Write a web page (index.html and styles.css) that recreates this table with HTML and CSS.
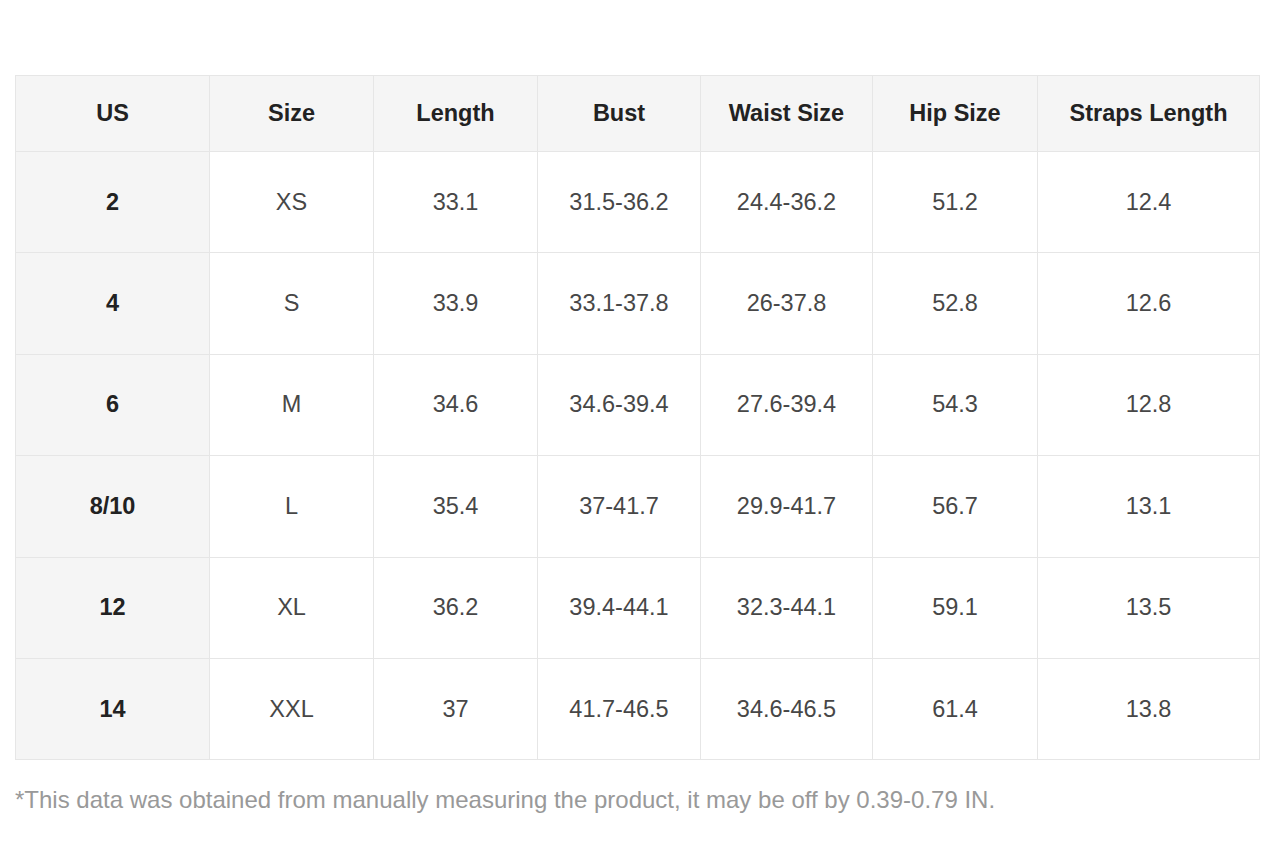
FILE: index.html
```html
<!DOCTYPE html>
<html>
<head>
<meta charset="utf-8">
<link rel="stylesheet" href="styles.css">
</head>
<body>
<div class="wrap">
<table class="chart">
<colgroup>
<col class="c1"><col class="c2"><col class="c3"><col class="c4"><col class="c5"><col class="c6"><col class="c7">
</colgroup>
<thead>
<tr><th>US</th><th>Size</th><th>Length</th><th>Bust</th><th>Waist Size</th><th>Hip Size</th><th>Straps Length</th></tr>
</thead>
<tbody>
<tr><th>2</th><td>XS</td><td>33.1</td><td>31.5-36.2</td><td>24.4-36.2</td><td>51.2</td><td>12.4</td></tr>
<tr><th>4</th><td>S</td><td>33.9</td><td>33.1-37.8</td><td>26-37.8</td><td>52.8</td><td>12.6</td></tr>
<tr><th>6</th><td>M</td><td>34.6</td><td>34.6-39.4</td><td>27.6-39.4</td><td>54.3</td><td>12.8</td></tr>
<tr><th>8/10</th><td>L</td><td>35.4</td><td>37-41.7</td><td>29.9-41.7</td><td>56.7</td><td>13.1</td></tr>
<tr><th>12</th><td>XL</td><td>36.2</td><td>39.4-44.1</td><td>32.3-44.1</td><td>59.1</td><td>13.5</td></tr>
<tr><th>14</th><td>XXL</td><td>37</td><td>41.7-46.5</td><td>34.6-46.5</td><td>61.4</td><td>13.8</td></tr>
</tbody>
</table>
<p class="note">*This data was obtained from manually measuring the product, it may be off by 0.39-0.79 IN.</p>
</div>
</body>
</html>
```
FILE: styles.css
```css
html, body {
  margin: 0;
  padding: 0;
  background: #ffffff;
}
.wrap {
  padding: 75px 0 0 15px;
  font-family: "Liberation Sans", Arial, sans-serif;
}
.chart {
  border-collapse: collapse;
  table-layout: fixed;
  width: 1244px;
}
.c1 { width: 194px; }
.c2 { width: 164px; }
.c3 { width: 164px; }
.c4 { width: 163px; }
.c5 { width: 172px; }
.c6 { width: 165px; }
.c7 { width: 222px; }
.chart th, .chart td {
  border: 1px solid #e6e6e6;
  text-align: center;
  vertical-align: middle;
  padding: 0;
  font-size: 23.5px;
}
.chart thead th {
  height: 75px;
  background: #f5f5f5;
  color: #222;
  font-weight: bold;
}
.chart tbody tr {
  height: 101.4px;
}
.chart tbody th {
  background: #f5f5f5;
  color: #222;
  font-weight: bold;
}
.chart td {
  color: #474747;
  font-weight: normal;
}
.note {
  margin: 26px 0 0 0;
  color: #999999;
  font-size: 24px;
}
```
